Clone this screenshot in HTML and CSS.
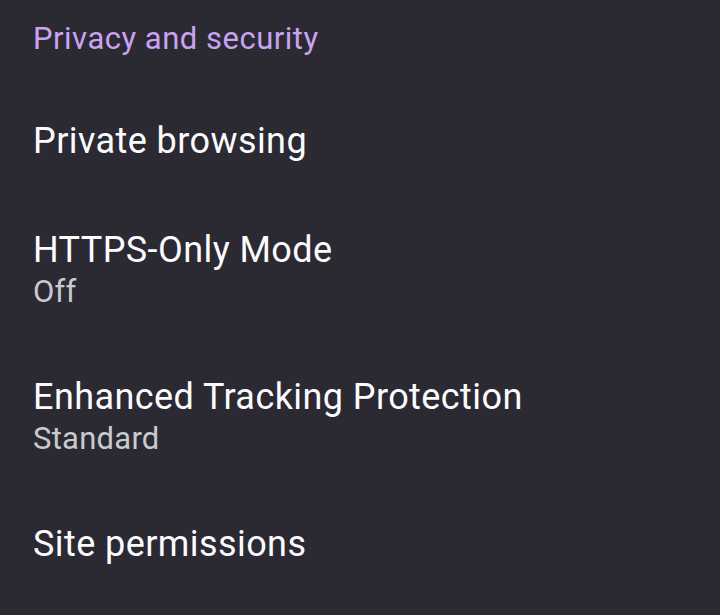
FILE: index.html
```html
<!DOCTYPE html>
<html>
<head>
<meta charset="utf-8">
<link rel="stylesheet" href="styles.css">
</head>
<body>
<div class="screen">
  <div class="category">Privacy and security</div>
  <div class="pref">
    <div class="title">Private browsing</div>
  </div>
  <div class="pref">
    <div class="title">HTTPS-Only Mode</div>
    <div class="summary">Off</div>
  </div>
  <div class="pref">
    <div class="title">Enhanced Tracking Protection</div>
    <div class="summary">Standard</div>
  </div>
  <div class="pref">
    <div class="title">Site permissions</div>
  </div>
</div>
</body>
</html>
```
FILE: styles.css
```css
html, body {
  margin: 0;
  padding: 0;
  background: #2b2a33;
}
body {
  font-family: Roboto, "Noto Sans", sans-serif;
  width: 720px;
  height: 615px;
  overflow: hidden;
}
.screen {
  display: flex;
  flex-direction: column;
}
.category {
  color: #c9a3f2;
  font-size: 31px;
  line-height: 37px;
  letter-spacing: 0.5px;
  padding: 20px 33px 29px;
}
.pref {
  padding: 33.5px 33px;
  display: flex;
  flex-direction: column;
}
.title {
  color: #fbfbfe;
  font-size: 36px;
  line-height: 42px;
  letter-spacing: 0.42px;
}
.summary {
  color: #c9c9d0;
  font-size: 31px;
  line-height: 34px;
  padding-top: 4px;
  letter-spacing: 0.25px;
}
```
